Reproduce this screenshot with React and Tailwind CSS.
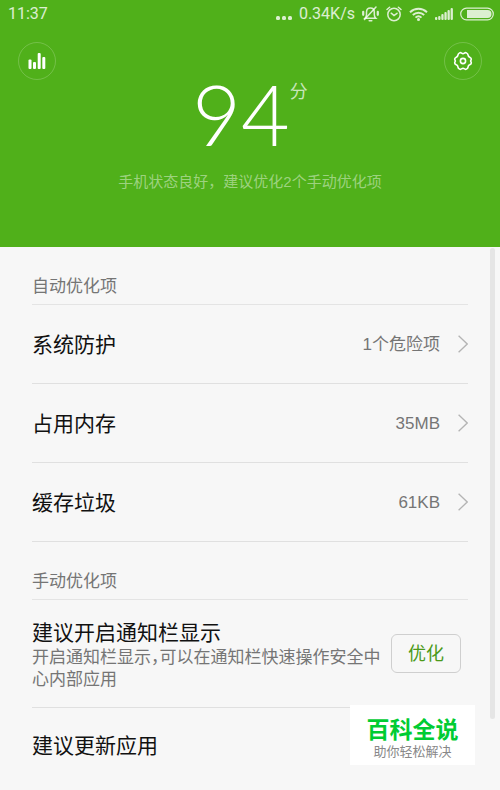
import { clsx } from 'clsx';

const autoItems = [
  { name: '系统防护', value: '1个危险项' },
  { name: '占用内存', value: '35MB' },
  { name: '缓存垃圾', value: '61KB' },
];

const StatusBar = () => (
  <div className="flex h-7 items-center justify-between pl-2 pr-[6px] font-['Roboto',sans-serif] text-base text-white/80">
    <span>11:37</span>
    <div className="flex items-center gap-[7px]">
      <svg width="16" height="16" viewBox="0 0 16 16" fill="currentColor" aria-hidden="true">
        <rect x="0" y="10" width="4" height="4" rx="1.5" />
        <rect x="6" y="10" width="4" height="4" rx="1.5" />
        <rect x="12" y="10" width="4" height="4" rx="1.5" />
      </svg>
      <span>0.34K/s</span>
      {/* Silencio */}
      <svg width="17" height="16" viewBox="0 0 17 16" fill="none" stroke="currentColor" strokeWidth="1.5" strokeLinecap="round" aria-hidden="true">
        <path d="M3 12.2h10.8c-1-1-1.5-2-1.5-3.5V6.2C12.3 3.6 10.7 2 8.4 2S4.5 3.6 4.5 6.2v2.5c0 1.5-.5 2.5-1.5 3.5z" />
        <path d="M7.2 14.7h2.600" />
        <path d="M1.200 5.800v3M15.800 5.800v3" strokeWidth="2.200" />
        <path d="M2.500 13.500L14 1" />
      </svg>
      {/* Alarma */}
      <svg width="16" height="16" viewBox="0 0 16 16" fill="none" stroke="currentColor" strokeWidth="1.500" strokeLinecap="round" aria-hidden="true">
        <circle cx="8" cy="8.500" r="6.200" />
        <path d="M5.200 7.200L8 9.500l3-2.200M1 3.500L3.600 1.200M15 3.500l-2.600-2.300" />
      </svg>
      {/* Wifi */}
      <svg width="19" height="16" viewBox="0 0 19 16" fill="none" stroke="currentColor" strokeWidth="1.900" aria-hidden="true">
        <path d="M1 6.200c4.900-4.600 12.100-4.600 17 0M3.800 9c3.300-3.100 8.100-3.100 11.400 0M6.500 11.600c1.800-1.600 4.200-1.600 6 0" />
        <circle cx="9.500" cy="13.500" r="1.500" fill="currentColor" stroke="none" />
      </svg>
      <svg width="18" height="16" viewBox="0 0 18 16" fill="currentColor" aria-hidden="true">
        <rect x="0" y="11" width="2.300" height="3" rx="1" />
        <rect x="3.200" y="10" width="2.300" height="4" rx="1" />
        <rect x="6.300" y="8" width="2.300" height="6" rx="1" />
        <rect x="9.400" y="6" width="2.300" height="8" rx="1" />
        <rect x="12.500" y="4" width="2.300" height="10" rx="1" />
        <rect x="15.600" y="2" width="2.300" height="12" rx="1" />
      </svg>
      <svg width="34" height="14" viewBox="0 0 34 14" aria-hidden="true">
        <rect x="0.700" y="1.200" width="32.600" height="11.600" rx="5.800" fill="none" stroke="currentColor" strokeWidth="1.200" />
        <path d="M7 3h20.500a4 4 0 0 1 0 8H7z" fill="currentColor" />
      </svg>
    </div>
  </div>
);

const RoundButton = ({ label, children }) => (
  <button
    type="button"
    aria-label={label}
    className="flex size-[38px] items-center justify-center rounded-full border border-white/20 text-white"
  >
    {children}
  </button>
);

const Header = () => (
  <header className="h-[247px] bg-[#50b01a] text-white">
    <StatusBar />
    <div className="flex justify-between px-[18px] pt-[14px]">
      <RoundButton label="统计">
        <svg width="18" height="16" viewBox="0 0 18 16" fill="currentColor" aria-hidden="true">
          <rect x="0.500" y="6.500" width="3" height="9.500" rx="1" />
          <rect x="5" y="9" width="3" height="7" rx="1" />
          <rect x="9.700" y="0" width="3" height="16" rx="1" />
          <rect x="14.300" y="4" width="3" height="12" rx="1" />
        </svg>
      </RoundButton>
      <RoundButton label="设置">
        <svg width="20" height="20" viewBox="0 0 20 20" fill="none" stroke="currentColor" strokeWidth="1.600" strokeLinejoin="round" aria-hidden="true">
          <path d="M6.600 1.900c.8-.4 1.500-.2 2 .3.800.6 2 .6 2.800 0 .5-.5 1.200-.7 2-.3 1.200.6 1.600 1.400 1.700 2.300.1 1 .7 1.700 1.600 2.100 1 .5 1.600 1 1.600 1.800 0 .7-.3 1-.7 1.900.4.900.7 1.200.7 1.900 0 .8-.6 1.300-1.600 1.800-.9.400-1.500 1.100-1.600 2.100-.1.900-.5 1.700-1.700 2.300-.8.400-1.500.2-2-.3-.8-.6-2-.6-2.800 0-.5.500-1.200.7-2 .3-1.200-.6-1.600-1.400-1.700-2.300-.1-1-.7-1.700-1.600-2.100-1-.5-1.600-1-1.600-1.800 0-.7.300-1 .7-1.900-.4-.9-.7-1.200-.7-1.900 0-.8.600-1.300 1.600-1.800.9-.4 1.500-1.100 1.600-2.100.1-.9.500-1.700 1.700-2.300z" />
          <circle cx="10" cy="10" r="2.600" />
        </svg>
      </RoundButton>
    </div>
    <div className="flex items-start justify-center">
      <span className="font-['Lato',sans-serif] text-[84px] leading-[68px] font-light">94</span>
      <span className="text-lg leading-6 text-white/70">分</span>
    </div>
    <p className="pt-[22px] text-center text-[15px] leading-6 text-white/45">
      手机状态良好，建议优化2个手动优化项
    </p>
  </header>
);

const SectionTitle = ({ children }) => (
  <h2 className="border-b border-[#e4e4e4] pt-7 pb-[5px] text-[17px] leading-6 text-[#757575]">
    {children}
  </h2>
);

const Row = ({ name, value, last }) => (
  <button
    type="button"
    className={clsx(
      'flex w-full items-center text-left',
      last ? 'h-[74px]' : 'h-[79px] border-b border-[#e0e0e0]'
    )}
  >
    <span className="flex-1 pt-[2px] text-[21px] leading-7 text-[#111]">{name}</span>
    {value && (
      <>
        <span className="mr-[18px] pt-[2px] text-[17px] leading-6 text-[#757575]">{value}</span>
        <svg width="10" height="18" viewBox="0 0 10 18" fill="none" stroke="#b4b4b4" strokeWidth="1.300" aria-hidden="true">
          <path d="M0.600 0.800L9.200 9L0.600 17.200" />
        </svg>
      </>
    )}
  </button>
);

const Watermark = () => (
  <div className="absolute right-[25px] bottom-[25px] flex h-[60px] w-[125px] flex-col items-center bg-white pt-[11px]">
    <span className="text-[23px] leading-7 font-bold text-[#00cc33]">百科全说</span>
    <span className="text-[13px] leading-4 text-[#888]">助你轻松解决</span>
  </div>
);

const App = () => {
  return (
    <div className="relative min-h-screen bg-[#f7f7f7] font-['Liberation_Sans','Noto_Sans_CJK_SC',sans-serif]">
      <Header />

      <main className="px-8">
        <section>
          <SectionTitle>自动优化项</SectionTitle>
          {autoItems.map((item) => (
            <Row key={item.name} name={item.name} value={item.value} />
          ))}
        </section>

        <section>
          <SectionTitle>手动优化项</SectionTitle>
          <div className="flex items-center border-b border-[#e0e0e0] py-4">
            <div className="flex-1 pt-[3px]">
              <h3 className="text-[21px] leading-7 text-[#111]">建议开启通知栏显示</h3>
              <p className="text-[17px] leading-[22px] text-[#757575] [font-feature-settings:'halt']">
                开启通知栏显示，可以在通知栏快速操作安全中心内部应用
              </p>
            </div>
            <button
              type="button"
              className="mr-[7px] h-[39px] w-[70px] rounded-md border border-[#cfcfcf] text-lg leading-6 text-[#4c9a1a]"
            >
              优化
            </button>
          </div>
          <Row name="建议更新应用" last />
        </section>
      </main>

      {/* Barra de desplazamiento */}
      <div className="absolute top-[248px] right-[5px] h-[471px] w-[5px] rounded-full bg-[#e5e5e5]" />
      <Watermark />
    </div>
  );
};

export default App;
